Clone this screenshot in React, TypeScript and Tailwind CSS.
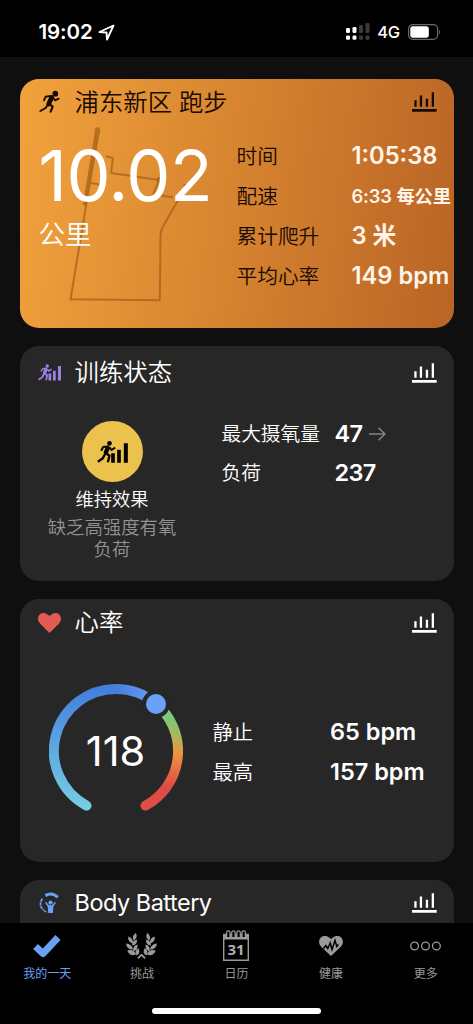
import type { ReactNode } from 'react'

interface StatRow {
  label: string
  value: ReactNode
  small?: boolean
}

const activityStats: StatRow[] = [
  { label: '时间', value: '1:05:38' },
  { label: '配速', value: '6:33 每公里', small: true },
  { label: '累计爬升', value: '3 米' },
  { label: '平均心率', value: '149 bpm' }
]

function RunIcon() {
  return (
    <svg className="w-[22px] h-[24px]" viewBox="0 0 66 72" fill="none" stroke="currentColor" strokeWidth="6.500" strokeLinejoin="round" strokeLinecap="round">
      <circle cx="49" cy="11" r="8.500" fill="currentColor" stroke="none" />
      <path d="M38 22L29 42" strokeWidth="14" />
      <path d="M35 18L20 20L15 31M42 23L48 31L59 26" strokeWidth="5.500" />
      <path d="M31 42L41 50L35 65" />
      <path d="M27 43L20 54L4 63" strokeWidth="5.500" />
    </svg>
  )
}

function TrainingIcon({ className }: { className: string }) {
  return (
    <svg className={className} viewBox="0 0 92 66" fill="none" stroke="currentColor" strokeWidth="7" strokeLinejoin="round">
      <circle cx="37" cy="7" r="7" fill="currentColor" stroke="none" />
      <path d="M33 18L25 37" strokeWidth="13" />
      <path d="M36 16L18 18L12 29M37 19L43 27L54 20" strokeWidth="6" />
      <path d="M25 36L37 44L32 64" />
      <path d="M25 36L17 52L2 62" />
      <path d="M42 37h11v28h-11zM60 26h11v39h-11zM80 7h12v58h-12z" fill="currentColor" stroke="none" />
    </svg>
  )
}

function HeartIcon() {
  return (
    <svg className="w-[23px] h-5" viewBox="0 0 23 20" fill="#e25a54">
      <path d="M11.5 20L2 10.6C-3 5 2.5-2.8 9 1.2Q10.600 2 11.500 3Q12.400 2 14 1.200C20.500-2.800 26 5 21 10.600Z" />
    </svg>
  )
}

function BodyBatteryIcon() {
  return (
    <svg className="w-[22px] h-[22px]" viewBox="0 0 22 22" fill="none" stroke="#68a2f2">
      <path d="M6.400 3.600Q13-.4 18.800 5.300" strokeWidth="3" />
      <path d="M3.300 6.800Q-.2 12 3.200 17" strokeWidth="1.800" strokeDasharray="3 .8" />
      <path d="M3.600 17.200Q5.200 19.200 7.500 20.200" strokeWidth="1.300" />
      <circle cx="11.500" cy="10.600" r="2.100" fill="#68a2f2" stroke="none" />
      <path d="M6 10.500L8.800 14.800L9.200 21H14L14.300 14.800L17 10.500L15.600 10L13 13.200H10L7.200 10Z" fill="#68a2f2" stroke="none" />
    </svg>
  )
}

function ChartIcon() {
  return (
    <svg className="w-[25px] h-5" viewBox="0 0 25 20" fill="currentColor">
      <path d="M0 17h24.700v2.700H0zM2.300 8.300h2.300v6.500H2.300zM7.800 3.500h2.300v11.300H7.800zM13.800 6.700h2.300v8.100H13.800zM19.700 .3h2.300v14.500H19.700z" />
    </svg>
  )
}

function RouteTrace() {
  return (
    <svg className="absolute left-0 top-0 w-[220px] h-[248px]" viewBox="-1.5 12 660 744" fill="none" stroke="#a8641a" strokeOpacity=".8" strokeWidth="6" strokeLinejoin="round" strokeLinecap="round">
      <path d="M226 164Q234 153 236 166L231 192L198 385L150 673L418 676L420 480Q421 465 430 450L470 380L492 345L505 330L492 330L496 342" />
      <path d="M228 168L192 388" strokeWidth="9" />
      <path d="M258 244L277 249L272 294L415 315L398 358L455 367M212 325L232 327L243 334" />
      <circle cx="416" cy="314" r="5" />
    </svg>
  )
}

function CardHeader({ icon, title, className, titleClass = 'text-[24.400px] font-[350]' }: { icon: ReactNode; title: string; className: string; titleClass?: string }) {
  return (
    <div className={`flex items-center pl-[18px] pr-[16.500px] shrink-0 ${className}`}>
      <div className="w-6 flex justify-center">{icon}</div>
      <h2 className={`ml-[13px] flex-1 leading-none whitespace-nowrap ${titleClass}`}>{title}</h2>
      <ChartIcon />
    </div>
  )
}

function HeartGauge() {
  return (
    <svg className="w-[134px] h-[134px] shrink-0" viewBox="0 0 134 134" fill="none" strokeWidth="10">
      <defs>
        <linearGradient id="cool" gradientUnits="userSpaceOnUse" x1="0" y1="125" x2="0" y2="5">
          <stop offset="0" stopColor="#78cde2" />
          <stop offset=".5" stopColor="#5da9e2" />
          <stop offset="1" stopColor="#447fdc" />
        </linearGradient>
        <linearGradient id="blue" gradientUnits="userSpaceOnUse" x1="67" y1="0" x2="98" y2="0">
          <stop offset="0" stopColor="#447fdc" />
          <stop offset="1" stopColor="#6199f0" />
        </linearGradient>
        <linearGradient id="warm" gradientUnits="userSpaceOnUse" x1="0" y1="28" x2="0" y2="102">
          <stop offset="0" stopColor="#72cd86" />
          <stop offset=".25" stopColor="#9abd64" />
          <stop offset=".56" stopColor="#eb9640" />
          <stop offset="1" stopColor="#df4b45" />
        </linearGradient>
      </defs>
      <path d="M37.500 121.600A62 62 0 0 1 67.500 5" stroke="url(#cool)" strokeLinecap="round" />
      <path d="M67 5A62 62 0 0 1 107 19.600" stroke="url(#blue)" />
      <path d="M107 19.600A62 62 0 0 1 96.500 121.600" stroke="url(#warm)" strokeLinecap="round" />
      <circle cx="107" cy="20" r="14" fill="#272727" />
      <circle cx="107" cy="20" r="10" fill="#68a2fa" />
      <text x="66.500" y="82" textAnchor="middle" fill="#fff" fontSize="41.500">118</text>
    </svg>
  )
}

function CheckIcon() {
  return (
    <svg className="w-[30px] h-[24px]" viewBox="0 0 30 24" fill="none" stroke="#68a0f2" strokeWidth="7" strokeLinejoin="round">
      <path d="M3.500 12.500L11 19.500L26 3.500" />
    </svg>
  )
}

function LaurelIcon() {
  const leaves = (
    <>
      <path d="M9.800 0Q12.500 4.500 7.500 7.500Q5.500 3 9.800 0ZM2.200 3.500Q7.500 5 7 10.500Q1.500 9 2.200 3.500ZM11 6.500Q11.500 12 6 12.500Q6 7.500 11 6.500ZM0 10.500Q6 11 7 16.500Q.5 16.500 0 10.500ZM11.500 11.500Q12 17 7.500 18.500Q6 13 11.500 11.500ZM1.200 17.500Q8 15.500 10 21.500Q4 24 1.200 17.500ZM12.300 15Q15 20.500 10.500 22.500Q8 18 12.300 15Z" />
      <path d="M12 25.300L15.500 21.800L19 25.300" fill="none" stroke="#9a9a9a" strokeWidth="1.600" />
    </>
  )
  return (
    <svg className="w-[31px] h-[26px]" viewBox="0 0 31 26" fill="#9a9a9a">
      <g>{leaves}</g>
      <g transform="translate(31 0) scale(-1 1)">{leaves}</g>
    </svg>
  )
}

function CalendarIcon() {
  return (
    <svg className="w-[26px] h-[31px]" viewBox="0 0 26 31" fill="none" stroke="#9a9a9a">
      <path d="M.7 4.500h24.600v25.700H.7z" strokeWidth="1.400" />
      <path d="M0 4h26v5.500H0z" fill="#9a9a9a" stroke="none" />
      <path d="M3.600 7.500V2.500a1.700 1.700 0 0 1 3.400 0V7.500zM8.700 7.500V2.500a1.700 1.700 0 0 1 3.400 0V7.500zM13.900 7.500V2.500a1.700 1.700 0 0 1 3.400 0V7.500zM19 7.500V2.500a1.700 1.700 0 0 1 3.400 0V7.500z" fill="#000" stroke="#9a9a9a" strokeWidth="1.200" />
      <text x="13" y="24.800" textAnchor="middle" fontSize="15" fontWeight="700" fill="#b0b0b0" stroke="none" fontFamily="Noto Sans">31</text>
    </svg>
  )
}

function HealthIcon() {
  return (
    <svg className="w-6 h-5" viewBox="0 0 24 20">
      <path d="M12 20L2 10.600C-3 5 2.500-2.800 9 .8Q11 2 12 3Q13 2 15 .8C21.500-2.800 27 5 22 10.600Z" fill="#9a9a9a" />
      <path d="M4.500 12.500L6.800 9.500L8.800 12.500L11.200 7L13 13.500L16 4.500L17.800 10.500L19.500 8.500" fill="none" stroke="#000" strokeWidth="1.500" />
    </svg>
  )
}

function MoreIcon() {
  return (
    <svg className="w-[31px] h-[10px]" viewBox="0 0 31 10" fill="none" stroke="#9a9a9a" strokeWidth="1.300">
      <circle cx="4.600" cy="5" r="3.900" />
      <circle cx="15.500" cy="5" r="3.900" />
      <circle cx="26.400" cy="5" r="3.900" />
    </svg>
  )
}

const tabs = [
  { label: '我的一天', icon: <CheckIcon />, active: true },
  { label: '挑战', icon: <LaurelIcon /> },
  { label: '日历', icon: <CalendarIcon /> },
  { label: '健康', icon: <HealthIcon /> },
  { label: '更多', icon: <MoreIcon /> }
]

function StatusBar() {
  return (
    <header className="h-[57px] shrink-0 bg-black flex items-center pl-[38.500px] pr-8 pt-[7px]">
      <span className="text-[20.500px] leading-none font-semibold tracking-[-0.1px]">19:02</span>
      <svg className="ml-[5px] w-[17px] h-[17px]" viewBox="0 0 17 17" fill="none" stroke="#fff" strokeWidth="1.900" strokeLinejoin="round">
        <path d="M15.500 1.500L1.500 8L8.500 8.500L9 15.500Z" />
      </svg>
      <svg className="ml-auto w-6 h-[18px]" viewBox="0 0 24 18" fill="#fff">
        <rect x="0" y="5" width="4" height="5" rx="1.300" />
        <rect x="6.500" y="4" width="4" height="6" rx="1.300" />
        <rect x="0" y="12.500" width="4" height="4.200" rx="1.300" />
        <rect x="6.500" y="12.500" width="4" height="4.200" rx="1.300" />
        <g fill="#3b3b3b">
          <rect x="13" y="2" width="4" height="8" rx="1.300" />
          <rect x="19.500" y="0" width="4" height="10" rx="1.300" />
          <rect x="13" y="12.500" width="4" height="4.200" rx="1.300" />
          <rect x="19.500" y="12.500" width="4" height="4.200" rx="1.300" />
        </g>
      </svg>
      <span className="ml-[7px] text-[16.500px] leading-none font-medium tracking-[-0.2px]">4G</span>
      <svg className="ml-2 w-[33px] h-4" viewBox="0 0 33 16" fill="none">
        <rect x=".6" y=".6" width="29" height="14.800" rx="4.300" stroke="#6b6b6b" strokeWidth="1.200" />
        <rect x="2.300" y="2.300" width="18.500" height="11.400" rx="2.700" fill="#fff" />
        <path d="M31 5.500Q33 8 31 10.500Z" fill="#6b6b6b" />
      </svg>
    </header>
  )
}

export default function App() {
  return (
    <div className="w-[473px] h-[1024px] bg-[#0f0f0f] text-white flex flex-col overflow-hidden font-['Inter','Noto_Sans_CJK_SC',sans-serif]">
      <StatusBar />

      <main className="flex-1 min-h-0 overflow-hidden w-[434px] mx-auto pt-[22px] flex flex-col gap-[18px]">
        {/* 最近活动 */}
        <section className="relative h-[249px] shrink-0 rounded-[19px] overflow-hidden bg-[linear-gradient(97deg,#f1a23c_0%,#d98631_45%,#ba6425_100%)]">
          <RouteTrace />
          <div className="relative">
            <CardHeader icon={<RunIcon />} title="浦东新区 跑步" className="h-[46px] text-[#160b02]" />
            <div className="flex pt-[11px]">
              <div className="w-[217px] pl-5 pt-1">
                <p className="text-[70px] leading-[72px] -ml-px tracking-[-0.5px] whitespace-nowrap">10.02</p>
                <p className="mt-[9px] text-[26.500px] leading-[26px] font-[350] -ml-px">公里</p>
              </div>
              <div className="flex-1">
                {activityStats.map((row) => (
                  <div key={row.label} className="h-10 flex items-center whitespace-nowrap">
                    <span className="w-[115px] text-[20.700px] leading-none font-[350] text-[#160b02] pt-0.5">{row.label}</span>
                    <span className={row.small ? 'text-[18.300px] leading-none font-semibold tracking-[-0.1px] text-[#fff4e8]' : 'text-[23.700px] leading-none font-semibold text-[#fff4e8]'}>{row.value}</span>
                  </div>
                ))}
              </div>
            </div>
          </div>
        </section>

        {/* 训练状态 */}
        <section className="h-[235px] shrink-0 rounded-[19px] bg-[#272727]">
          <CardHeader icon={<TrainingIcon className="w-[23px] h-[17px] text-[#9a80e4]" />} title="训练状态" className="h-[53px]" />
          <div className="flex pt-[22px]">
            <div className="w-[185px] flex flex-col items-center text-center">
              <div className="w-[61px] h-[61px] rounded-full bg-[#ecc24e] text-black flex items-center justify-center">
                <TrainingIcon className="w-[31px] h-[22px]" />
              </div>
              <p className="mt-[7px] text-[18.300px] leading-5 font-[350]">维持效果</p>
              <p className="mt-2 w-[134px] text-[18.400px] leading-[21.500px] font-[350] text-[#939393]">缺乏高强度有氧负荷</p>
            </div>
            <div className="pl-[17px] -mt-[7px]">
              <div className="h-[39px] flex items-center">
                <span className="w-[113px] text-[19.700px] leading-none font-[350] pt-0.5">最大摄氧量</span>
                <span className="text-[23.500px] leading-none font-semibold tracking-[-0.7px]">47</span>
                <svg className="ml-[7px] w-[17px] h-[14px]" viewBox="0 0 17 14" fill="none" stroke="#858585" strokeWidth="1.500">
                  <path d="M0 7h16M9.500.7L16 7L9.500 13.300" />
                </svg>
              </div>
              <div className="h-[39px] flex items-center">
                <span className="w-[113px] text-[19.700px] leading-none font-[350] pt-0.5">负荷</span>
                <span className="text-[23.500px] leading-none font-semibold tracking-[-0.7px]">237</span>
              </div>
            </div>
          </div>
        </section>

        {/* 心率 */}
        <section className="h-[262.500px] shrink-0 rounded-[19px] bg-[#272727]">
          <CardHeader icon={<HeartIcon />} title="心率" className="h-[47px]" />
          <div className="flex pl-[29.500px] pt-[38px]">
            <HeartGauge />
            <div className="pl-[29.500px] pt-7">
              <div className="h-10 flex items-center">
                <span className="w-[117.500px] text-[20.300px] leading-none font-[350] pt-[3px]">静止</span>
                <span className="text-[23.500px] leading-none font-semibold">65 bpm</span>
              </div>
              <div className="h-10 flex items-center">
                <span className="w-[117.500px] text-[20.300px] leading-none font-[350] pt-[3px]">最高</span>
                <span className="text-[23.500px] leading-none font-semibold">157 bpm</span>
              </div>
            </div>
          </div>
        </section>

        {/* Body Battery */}
        <section className="h-[235px] shrink-0 rounded-[19px] bg-[#272727]">
          <CardHeader icon={<BodyBatteryIcon />} title="Body Battery" className="h-[47px]" titleClass="text-[23.500px] tracking-[-0.5px]" />
        </section>
      </main>

      <nav className="h-[101px] shrink-0 bg-black">
        <div className="flex h-[85px]">
          {tabs.map((tab) => (
            <div key={tab.label} className={`flex-1 flex flex-col items-center ${tab.active ? 'text-[#68a0f2]' : 'text-[#9a9a9a]'}`}>
              <div className="h-[45px] flex items-center justify-center">{tab.icon}</div>
              <span className="text-[12px] leading-3">{tab.label}</span>
            </div>
          ))}
        </div>
        <div className="w-[169px] h-[6px] rounded-full bg-white mx-auto" />
      </nav>
    </div>
  )
}
